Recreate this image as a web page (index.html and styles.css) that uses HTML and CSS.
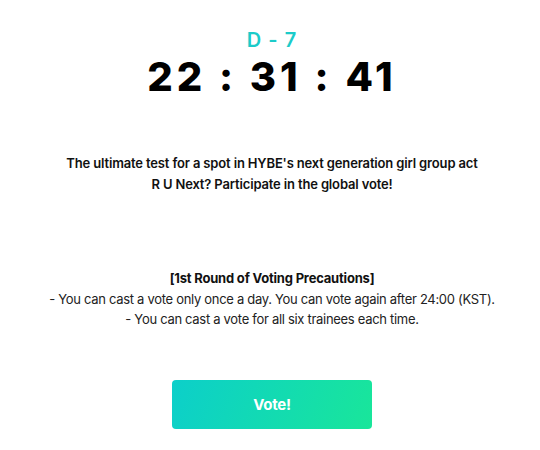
FILE: index.html
```html
<!DOCTYPE html>
<html lang="en">
<head>
  <meta charset="UTF-8">
  <meta name="viewport" content="width=device-width, initial-scale=1.0">
  <title>R U Next? Global Vote</title>
  <link rel="stylesheet" href="styles.css">
</head>
<body>
  <div class="vote-container">
    <section class="countdown">
      <div class="d-day">D - 7</div>
      <div class="timer">22 : 31 : 41</div>
    </section>

    <p class="intro">
      The ultimate test for a spot in HYBE's next generation girl group act<br>
      R U Next? Participate in the global vote!
    </p>

    <div class="notice">
      <h3>[1st Round of Voting Precautions]</h3>
      <p>- You can cast a vote only once a day. You can vote again after 24:00 (KST).</p>
      <p>- You can cast a vote for all six trainees each time.</p>
    </div>

    <button class="vote-btn">Vote!</button>
  </div>
</body>
</html>
```
FILE: styles.css
```css
/* Global Styles */
* {
  margin: 0;
  padding: 0;
  box-sizing: border-box;
  font-family: 'Inter', 'Noto Sans', sans-serif;
}

body {
  background: #ffffff;
  color: #111;
}

.vote-container {
  display: flex;
  flex-direction: column;
  align-items: center;
  padding-top: 28px;
  padding-left: 4px;
}

/* Countdown */
.countdown {
  text-align: center;
}

.d-day {
  color: #1ccbc9;
  font-size: 20px;
  font-weight: 600;
  letter-spacing: 1px;
  line-height: 24px;
}

.timer {
  font-size: 40px;
  font-weight: 800;
  letter-spacing: 4px;
  line-height: 48px;
  margin-top: 1px;
  color: #000;
}

/* Intro */
.intro {
  margin-top: 52px;
  font-size: 13px;
  font-weight: 600;
  line-height: 21px;
  text-align: center;
  letter-spacing: -0.15px;
}

/* Notice */
.notice {
  margin-top: 73px;
  text-align: center;
  font-size: 13px;
  line-height: 20.5px;
  letter-spacing: -0.3px;
  color: #222;
}

.notice h3 {
  font-size: 13px;
  font-weight: 700;
  letter-spacing: -0.2px;
  color: #111;
}

/* Vote Button */
.vote-btn {
  margin-top: 50px;
  width: 200px;
  height: 49px;
  border: none;
  border-radius: 4px;
  background: linear-gradient(110deg, #0ccfca, #19e69a);
  color: white;
  font-size: 15px;
  font-weight: 700;
  letter-spacing: -0.3px;
  cursor: pointer;
}
```
